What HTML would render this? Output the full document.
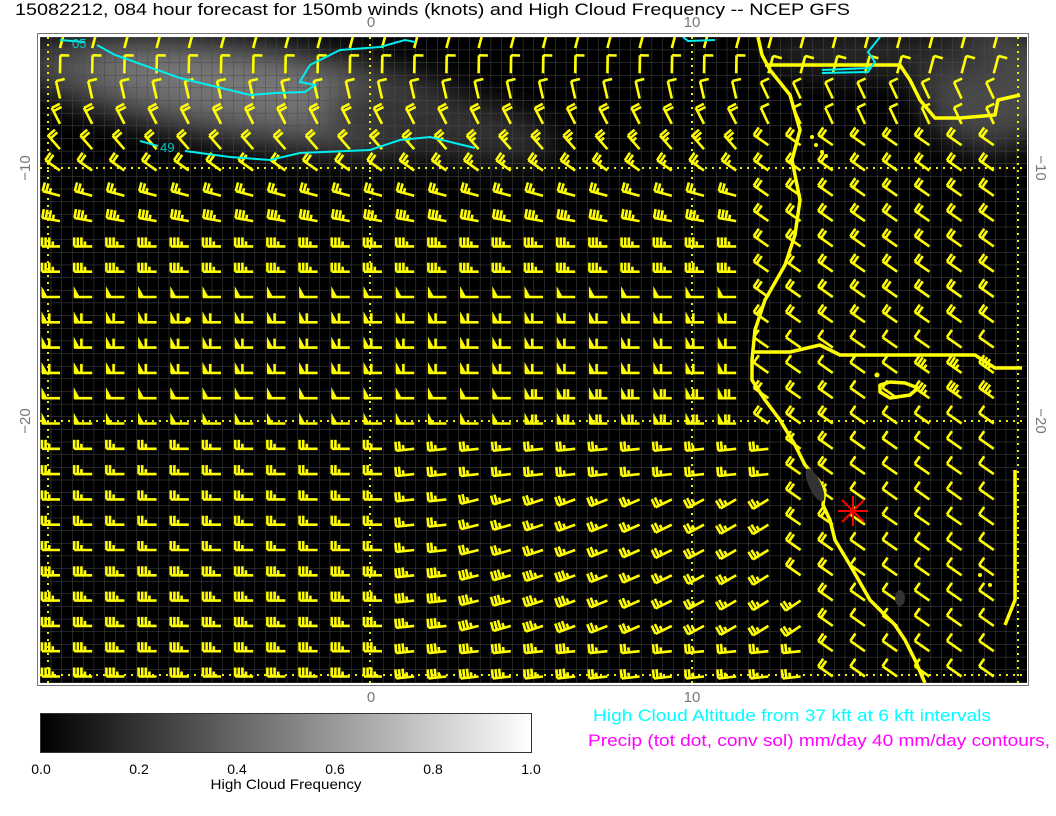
<!DOCTYPE html>
<html><head><meta charset="utf-8">
<style>
html,body{margin:0;padding:0;background:#fff;width:1056px;height:816px;overflow:hidden;font-family:"Liberation Sans",sans-serif}
svg{position:absolute;left:0;top:0}
</style></head>
<body>
<svg id="s" width="1056" height="816" xmlns="http://www.w3.org/2000/svg">
<defs>
<filter id="bl" x="-30%" y="-30%" width="160%" height="160%"><feGaussianBlur stdDeviation="16"/></filter>
<linearGradient id="cb" x1="0" x2="1" y1="0" y2="0"><stop offset="0" stop-color="#000"/><stop offset="1" stop-color="#fff"/></linearGradient>
<pattern id="gr" x="40" y="37" width="10.73" height="12.65" patternUnits="userSpaceOnUse"><path d="M0 0H10.73M0 0V12.65" stroke="#4a4a4a" stroke-width="1" fill="none"/></pattern>
<clipPath id="mc"><rect x="40" y="37" width="987" height="646"/></clipPath>
</defs>
<text x="15" y="15" font-size="17" fill="#000" textLength="835" lengthAdjust="spacingAndGlyphs">15082212, 084 hour forecast for 150mb winds (knots) and High Cloud Frequency -- NCEP GFS</text>
<rect x="37.5" y="33.5" width="991" height="652" fill="#fff" stroke="#777"/>
<rect x="40" y="37" width="987" height="646" fill="#000"/>
<g clip-path="url(#mc)">
<g filter="url(#bl)">
<ellipse cx="260" cy="95" rx="240" ry="50" fill="#555" transform="rotate(8 260 95)"/>
<ellipse cx="240" cy="85" rx="150" ry="30" fill="#777" transform="rotate(8 240 85)"/>
<ellipse cx="440" cy="125" rx="120" ry="32" fill="#333" transform="rotate(10 440 125)"/>
<ellipse cx="990" cy="85" rx="70" ry="65" fill="#4a4a4a"/>
<ellipse cx="880" cy="55" rx="120" ry="22" fill="#2a2a2a"/>
</g>
<rect x="40" y="37" width="987" height="646" fill="url(#gr)"/>
<g stroke="#ee0" stroke-width="2" stroke-dasharray="2 5" fill="none">
<path d="M370 37V683M692 37V683M48 37V683M1018 37V683M40 168H1027M40 421H1027M40 675H1027"/>
</g>
<g id="barbs" stroke="#ff0" stroke-width="2.6" fill="#ff0" stroke-linecap="butt"></g>
<g stroke="#ff0" stroke-width="3.5" fill="none" stroke-linejoin="round">
<path d="M758 37L762 55L770 70L790 95L800 130L792 160L800 200L795 235L785 265L765 300L755 330L752 360L752 380L765 400L780 420L795 445L805 465L818 480L825 490L823 505L830 520L835 540L850 565L870 600L895 625L905 640L915 660L925 683"/>
<path d="M752 352L790 352L820 345L840 355L975 355L995 368L1022 368"/>
<path d="M765 65L870 65L900 65L910 80L920 100L935 118L960 118L995 115L998 100L1020 95"/>
<path d="M1015 470V600L1005 625"/>
<path d="M880 385L890 382L905 383L918 388L910 395L890 398L880 392Z"/>
</g>
<g fill="#ff0"><circle cx="877" cy="375" r="2.5"/><circle cx="812" cy="137" r="2"/><circle cx="816" cy="145" r="2"/><circle cx="822" cy="152" r="2"/><circle cx="826" cy="156" r="2"/><circle cx="980" cy="575" r="2"/><circle cx="990" cy="585" r="2"/><circle cx="188" cy="320" r="3"/></g>
<ellipse cx="815" cy="485" rx="6" ry="18" fill="#333" transform="rotate(-25 815 485)"/>
<ellipse cx="900" cy="598" rx="5" ry="8" fill="#333"/>
<g stroke="#0ee" stroke-width="2" fill="none">
<path d="M97 45L115 55L180 78L250 95L275 93L305 92L315 85L300 82L302 78L310 65L340 50L380 47L405 40L415 42"/>
<path d="M140 141L158 146"/>
<path d="M185 151L230 157L270 160L300 153L370 150L400 140L430 137L475 148"/>
<path d="M60 40L85 42"/>
<path d="M822 70L870 68M822 73L868 72L875 62L868 52L880 37"/>
<path d="M683 37L688 41L715 40"/>
</g>
<text x="160" y="152" font-size="13" fill="#0cc">49</text>
<text x="72" y="48" font-size="13" fill="#0cc">05</text>
<g stroke="#f00" stroke-width="2"><path d="M838 511H868M853 496V526M842 500L864 522M864 500L842 522"/></g>
</g>
<g font-size="15" fill="#777" text-anchor="middle">
<text x="371" y="27">0</text><text x="692" y="27">10</text>
<text x="371" y="702">0</text><text x="692" y="702">10</text>
<text transform="translate(30 168) rotate(-90)">−10</text>
<text transform="translate(30 421) rotate(-90)">−20</text>
<text transform="translate(1036 168) rotate(90)">−10</text>
<text transform="translate(1036 421) rotate(90)">−20</text>
</g>
<text x="593" y="721" font-size="17" fill="#0ff" textLength="398" lengthAdjust="spacingAndGlyphs">High Cloud Altitude from 37 kft at 6 kft intervals</text>
<text x="588" y="746" font-size="17" fill="#f0f" textLength="462" lengthAdjust="spacingAndGlyphs">Precip (tot dot, conv sol) mm/day 40 mm/day contours,</text>
<rect x="40.5" y="713.5" width="491" height="39" fill="url(#cb)" stroke="#333"/>
<g font-size="14" fill="#000" text-anchor="middle">
<text x="41" y="774">0.0</text><text x="139" y="774">0.2</text><text x="237" y="774">0.4</text><text x="335" y="774">0.6</text><text x="433" y="774">0.8</text><text x="531" y="774">1.0</text>
<text x="286" y="789" textLength="151" lengthAdjust="spacingAndGlyphs">High Cloud Frequency</text>
</g>
</svg>
<script>
(function(){
var g=document.getElementById('barbs'),out='';
function barb(hx,hy,th,n,flag){
 var t=th*Math.PI/180,L=18,c=Math.cos(t),s=Math.sin(t);
 var tx=hx-L*c,ty=hy-L*s;
 out+='<path d="M'+tx.toFixed(1)+' '+ty.toFixed(1)+'L'+hx.toFixed(1)+' '+hy.toFixed(1)+'" fill="none"/>';
 var p=(th-90)*Math.PI/180,pc=Math.cos(p),ps=Math.sin(p),k=0;
 if(flag){
  var bx=tx,by=ty,ex=tx+5*c,ey=ty+5*s;
  out+='<path d="M'+bx.toFixed(1)+' '+by.toFixed(1)+'L'+(bx+9*pc).toFixed(1)+' '+(by+9*ps).toFixed(1)+'L'+ex.toFixed(1)+' '+ey.toFixed(1)+'Z" stroke-width="1"/>';
  k=2;
 }
 for(var i=0;i<n;i++){
  var d=(k+i)*3.6,bx=tx+d*c,by=ty+d*s,len=(i==n-1&&n>2)?5:9;
  out+='<path d="M'+bx.toFixed(1)+' '+by.toFixed(1)+'L'+(bx+len*pc).toFixed(1)+' '+(by+len*ps).toFixed(1)+'" fill="none"/>';
 }
}
for(var r=0;r<26;r++){
 for(var c=0;c<30;c++){
  var hx=60+32.2*c,hy=44+25.3*r,th,n,f=false;
  var right=(hx>745+(r>12?(r-12)*6:0));
  if(!right){
   if(r<6){th=105-r*14;n=r<3?1:2;if(c>10&&r>3)n=3;}
   else if(r<10){th=r==6?15:(r==7?10:0);n=r==6?3:4;}
   else if(r<16){th=0;n=(r>10&&r<14)?1:0;f=true;if(c>14&&r>13)n=2;}
   else{th=(c>12&&r>17&&r<24)?(-12-(c-12)*2):(c>10?-6:0);n=r<21?3:4;if(c>16)n=3;}
  }else{
   if(r<2){th=105;n=1;}
   else if(r<4){th=65;n=1;}
   else if(r<12){th=35;n=2;}
   else{th=35;n=(c<25&&r>13)?2:1;if(r>12&&r<15&&c>26)n=4;}
  }
  hy+= (th>45? 4:0);
  barb(hx,hy,th,n,f);
 }
}
g.innerHTML=out;
})();
</script>
</body></html>
